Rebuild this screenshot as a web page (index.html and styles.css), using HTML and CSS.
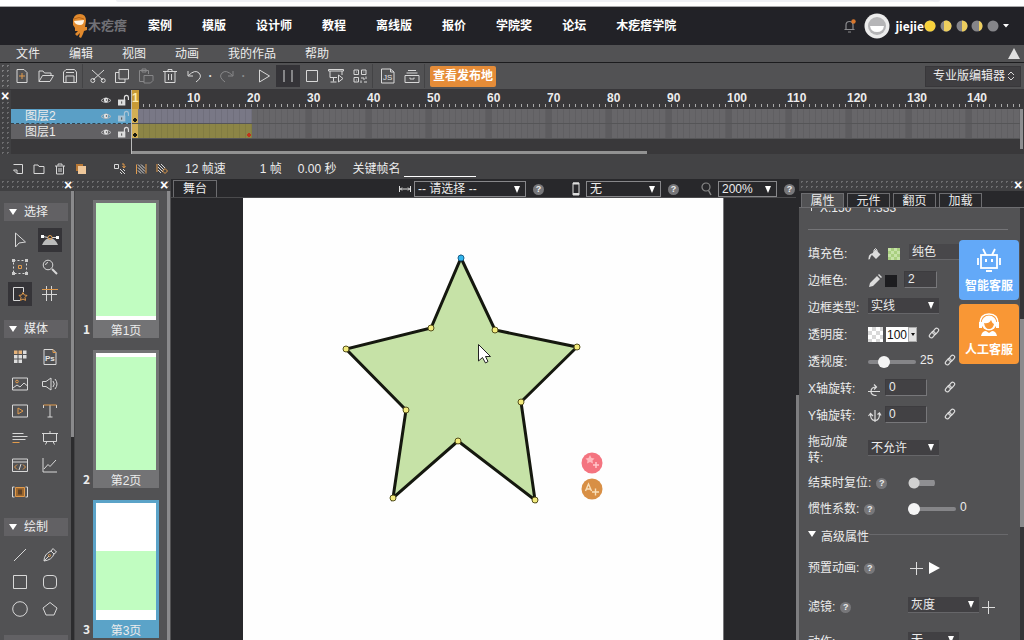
FILE: index.html
```html
<!DOCTYPE html>
<html lang="zh-CN">
<head>
<meta charset="utf-8">
<title>木疙瘩</title>
<link rel="stylesheet" href="styles.css">
</head>
<body>
<svg class="defs" aria-hidden="true">
  <symbol id="eye" viewBox="0 0 12 10"><path d="M1 5.500Q6 .5 11 5.500Q6 9.500 1 5.500Z" fill="none" stroke="#b4b4b6"/><circle cx="6" cy="5" r="2.200" fill="#e4e4e4"/><circle cx="6.500" cy="5" r=".8" fill="#444"/></symbol>
  <symbol id="lock" viewBox="0 0 12 12"><path d="M0 5.500h8V12H0z" fill="currentColor"/><path d="M7 6V3.500a2.200 2.500 0 0 1 4.400 0V6" fill="none" stroke="currentColor" stroke-width="1.300"/><path d="M4 7.500v2.500" stroke="#444"/></symbol>
  <symbol id="link" viewBox="0 0 14 14"><g fill="none" stroke="#dcdcdc" stroke-width="1.400"><rect x="5" y="2.700" width="8" height="4.600" rx="2.300" transform="rotate(-50 9 5)"/><rect x="1" y="6.700" width="8" height="4.600" rx="2.300" transform="rotate(-50 5 9)"/></g></symbol>
</svg>

<div class="browser-edge"><span></span></div>

<header class="site">
  <div class="logo">
    <svg width="16" height="26" viewBox="0 0 16 26"><path d="M1 9Q1 1 8 1Q14 1 14 8L13 14L15 14V17L12 18L11 21L9 25L7 24L8 20L5 23L3 21L6 18L3 18L3 15L1 12Z" fill="#e28a2d"/><path d="M2 8L12 7Q12 12 8 12Q3 12 2 8Z" fill="#fff3e2"/><path d="M2 6Q7 3 12 6" stroke="#b76518" fill="none"/></svg>
    <span>木疙瘩</span>
  </div>
  <nav class="site-nav"><a href="#">案例</a><a href="#">模版</a><a href="#">设计师</a><a href="#">教程</a><a href="#">离线版</a><a href="#">报价</a><a href="#">学院奖</a><a href="#">论坛</a><a href="#">木疙瘩学院</a></nav>
  <div class="account">
    <svg width="12" height="14" viewBox="0 0 12 14"><path d="M2 10V6Q2 2.500 5.500 2.500T9 6v4M.5 10.500h10M4 13h3" fill="none" stroke="#8b8b8e" stroke-width="1.200"/><circle cx="9.500" cy="2.500" r="2.200" fill="#d9772c"/></svg>
    <svg class="avatar" width="26" height="26" viewBox="0 0 26 26"><circle cx="13" cy="13" r="12.500" fill="#ececec"/><circle cx="13" cy="13" r="9" fill="#b5b5b7"/><path d="M6 13h14Q19 19 13 19T6 13Z" fill="#fff"/></svg>
    <strong>jiejie</strong>
    <svg width="76" height="12" viewBox="0 0 76 12"><g fill="#858589"><circle cx="6" cy="6" r="5.500"/><circle cx="22" cy="6" r="5.500"/><circle cx="38" cy="6" r="5.500"/><circle cx="53" cy="6" r="5.500"/><circle cx="69" cy="6" r="5.500"/></g><circle cx="6" cy="6" r="5.500" fill="#f8d23c"/><g fill="#edce5e"><path d="M20 .9a5.500 5.500 0 1 1 0 10.200ZM38 .5a5.500 5.500 0 0 1 0 11ZM55 .9a5.500 5.500 0 0 1 0 10.200Z"/></g></svg>
    <svg width="6" height="4" viewBox="0 0 6 4"><path d="M0 0h6L3 3.500Z" fill="#fff"/></svg>
  </div>
</header>

<nav class="menubar"><a href="#">文件</a><a href="#">编辑</a><a href="#">视图</a><a href="#">动画</a><a href="#">我的作品</a><a href="#">帮助</a>
  <svg width="12" height="12" viewBox="0 0 12 12"><path d="M6 0L12 11H0Z" fill="#e0e0e0"/></svg></nav>

<div class="toolbar">
  <span class="grip"></span>
  <button aria-label="新建"><svg viewBox="0 0 16 16"><path d="M3 1.500h7l3 3v10H3z"/><path class="o" d="M8 5v6M5 8h6"/></svg></button>
  <button aria-label="打开"><svg viewBox="0 0 16 16"><path d="M1 13.500V3h4l1.500 2H13v2.500M1 13.500L4.500 7.500H15.500L12 13.500Z"/></svg></button>
  <button aria-label="保存"><svg viewBox="0 0 16 16"><path d="M1.500 4L4 1.500h8.500L14.500 4v10.500h-13zM4 14V8h8v6M4 4.500h8"/></svg></button>
  <i class="sep"></i>
  <button aria-label="剪切"><svg viewBox="0 0 16 16"><path d="M2 2L13 12M14 2L3 12"/><circle cx="2.800" cy="12.500" r="2"/><circle cx="13.200" cy="12.500" r="2"/></svg></button>
  <button aria-label="复制"><svg viewBox="0 0 16 16"><path d="M5 1.500h9.500V11H5zM5 4.500H1.500v10H11V11"/></svg></button>
  <button aria-label="粘贴" class="dim"><svg viewBox="0 0 16 16"><path d="M6 13.500H1.500v-11h9V6M4 1h4v3H4zM6 7.500h9v5l-2.500 2.500H6z"/></svg></button>
  <button aria-label="删除"><svg viewBox="0 0 16 16"><path d="M1 3.500h14M6 3V1.500h4V3M3 3.500V14.500h10V3.500M6.500 6v6M9.500 6v6"/></svg></button>
  <button aria-label="撤销"><svg viewBox="0 0 16 16"><path d="M2 3v5h5M2.500 7.500Q9 1 13 5T10 14"/></svg></button>
  <i class="dot">·</i>
  <button aria-label="重做" class="dim"><svg viewBox="0 0 16 16"><path d="M14 3v5H9M13.500 7.500Q7 1 3 5T6 14"/></svg></button>
  <i class="dot dim">·</i>
  <button aria-label="播放" class="play"><svg viewBox="0 0 16 16"><path d="M3.500 2L13.500 8L3.500 14Z"/></svg></button>
  <button aria-label="暂停" class="on"><svg viewBox="0 0 16 16"><path d="M4 2v12M12 2v12"/></svg></button>
  <button aria-label="停止"><svg viewBox="0 0 16 16"><path d="M2.500 2.500h11v11h-11z"/></svg></button>
  <button aria-label="预览"><svg viewBox="0 0 16 16"><path d="M.5 1.500h15v1.500H.5zM2 3v6.500h7M14 3v4M5.500 9.500v4M2.500 14h6M10.500 7v7l4.500-3.500Z"/></svg></button>
  <button aria-label="二维码"><svg viewBox="0 0 16 16"><path d="M2 2h4.500v4.500H2zM9.500 2H14v4.500H9.500zM2 9.500h4.500V14H2zM9 10h3v2M14 8.500V11M9 12.500V15M12 14h3M4 4h.8M11.500 4h.8M4 12h.8"/></svg></button>
  <i class="sep"></i>
  <button aria-label="脚本"><svg viewBox="0 0 16 16"><path d="M1.500 1h9l3.500 3v11H1.500zM10.500 1v3H14"/><text x="3" y="12">JS</text></svg></button>
  <button aria-label="素材库"><svg viewBox="0 0 16 16"><path d="M1 7.500h14v7H1zM2.500 5h11M4 2.500h8M6 9.500v1.500h4V9.500"/></svg></button>
  <i class="sep"></i>
  <button class="publish">查看发布地</button>
  <button class="editor">专业版编辑器<svg viewBox="0 0 8 12"><path d="M1 5L4 2L7 5M1 7L4 10L7 7"/></svg></button>
</div>

<section class="timeline">
  <div class="strip"><button class="close" aria-label="关闭">×</button></div>
  <div class="layers">
    <div class="layer head"><span></span><svg class="eye"><use href="#eye"/></svg><svg class="lock"><use href="#lock"/></svg></div>
    <div class="layer selected"><span>图层2</span><svg class="eye"><use href="#eye"/></svg><svg class="lock"><use href="#lock"/></svg></div>
    <div class="layer"><span>图层1</span><svg class="eye"><use href="#eye"/></svg><svg class="lock"><use href="#lock"/></svg></div>
  </div>
  <div class="frames">
    <div class="ruler"><b class="now">1</b><b>10</b><b>20</b><b>30</b><b>40</b><b>50</b><b>60</b><b>70</b><b>80</b><b>90</b><b>100</b><b>110</b><b>120</b><b>130</b><b>140</b></div>
    <div class="track"><span class="key"></span><span class="span violet"></span></div>
    <div class="track"><span class="key"></span><span class="span olive"></span></div>
    <div class="scroll-x"><span></span></div>
  </div>
  <div class="frame-scroll"></div>
</section>

<div class="status">
  <div class="layer-tools">
    <button aria-label="新建图层"><svg viewBox="0 0 12 12"><path d="M1.500 1.500h9v9H5L1.500 7H5v3.500"/></svg></button>
    <button aria-label="新建文件夹"><svg viewBox="0 0 12 12"><path d="M1 2h4l1 1.500h5v7H1z"/></svg></button>
    <button aria-label="删除图层"><svg viewBox="0 0 12 12"><path d="M1 3h10M4 2.500V1h4v1.500M2.500 3v8h7V3M5 5v4M7 5v4"/></svg></button>
    <button aria-label="遮罩"><svg viewBox="0 0 12 12"><path d="M1 1h7v7H1z" fill="#b87835" stroke="none"/><path d="M3 3h8v8H3z" fill="#eec79a" stroke="none"/></svg></button>
  </div>
  <div class="layer-tools frame-tools">
    <button aria-label="洋葱皮"><svg viewBox="0 0 12 12"><path d="M.5 1.500h4v4h-4z"/><path d="M6 6l5 5M6 9l2 2M9 6l2 2"/><path class="o" d="M8 1h2v3M8.500 3L10 5l1.500-2"/></svg></button>
    <button aria-label="多帧编辑"><svg viewBox="0 0 12 12"><path d="M3 1.500l7 7M3 4.500l6 6M6 1.500l4 4M3 7.500l3 3"/><path class="o" d="M1.500 11V1.500M11 1v9.500"/></svg></button>
    <button aria-label="帧范围"><svg viewBox="0 0 12 12"><path d="M2 1l6 6M2 4l5 5M5 1l4 4M2 7l3 3"/><path class="o" d="M1 1v8M9 5.500l2.500 2.500L9 10.500L6.500 8Z"/></svg></button>
  </div>
  <span class="fps">12 帧速</span><span class="num">1 帧</span><span class="sec">0.00 秒</span>
  <label for="frame-name">关键帧名</label><input id="frame-name" type="text">
</div>

<main class="workspace">
  <aside class="tools">
    <div class="grip-bar"><button class="close" aria-label="关闭">×</button></div>
    <div class="tools-body">
      <h2>选择</h2>
      <div class="tool-grid">
        <button aria-label="选择"><svg viewBox="0 0 16 16"><path d="M3.500 1v14L7 11L13.500 10Z"/></svg></button>
        <button aria-label="节点" class="on"><svg viewBox="0 0 16 16"><path d="M0 13Q3 6 8 6T16 13Z" fill="#bbb" stroke="none"/><path d="M1 4.500L6 5.500M15 5.500H10"/><path d="M-1 3h3v3h-3zM14 4h3v3h-3z" fill="#fff" stroke="none"/><circle class="o" cx="8" cy="5.500" r="2"/></svg></button>
        <button aria-label="变形"><svg viewBox="0 0 16 16"><path d="M1.500 1.500h13v13h-13z" stroke-dasharray="2 2"/><path d="M0 0h3v3H0zM13 0h3v3h-3zM0 13h3v3H0zM13 13h3v3h-3z" fill="#ccc" stroke="none"/><path class="o" d="M6.500 6.500h3v3h-3z"/></svg></button>
        <button aria-label="缩放"><svg viewBox="0 0 16 16"><circle cx="6" cy="6" r="4.800"/><path d="M3.500 6Q4 3.500 6 3.500"/><path d="M10 10L15 15" stroke-width="2"/></svg></button>
        <button aria-label="收藏" class="on"><svg viewBox="0 0 16 16"><path d="M8 14.500H1.500v-13h10V6"/><path class="o" d="M11 6.500l1.300 2.500 2.700.4-2 2 .5 3-2.500-1.400L8.500 14.400l.5-3-2-2 2.700-.4Z"/></svg></button>
        <button aria-label="参考线"><svg viewBox="0 0 16 16"><path d="M4.500 0v15M9.500 0v15M0 8.500h15"/><path class="o" d="M0 3.500h16"/></svg></button>
      </div>
      <h2>媒体</h2>
      <div class="tool-grid">
        <button aria-label="素材"><svg viewBox="0 0 16 16"><g stroke="none" fill="#ddd"><path d="M2 6h3.500v3.500H2zM6.500 6H10v3.500H6.500zM11 6h3.500v3.500H11zM2 10.500h3.500V14H2zM6.500 10.500H10V14H6.500zM11 1.500h3.500V5H11z"/><path d="M2 1.500h3.500V5H2zM6.500 1.500H10V5H6.500z" fill="#e5b27a"/></g></svg></button>
        <button aria-label="PS 导入"><svg viewBox="0 0 16 16"><path d="M2 .5h9l3 3v12H2z"/><path class="o" d="M11 .5v3h3"/><text class="ps" x="3" y="11.500">Ps</text></svg></button>
        <button aria-label="图片"><svg viewBox="0 0 16 16"><path d="M.5 2h15v12H.5zM1 12l4-3 3 2 4-4 3.500 3"/><circle class="o" cx="5" cy="5.500" r="1.300"/></svg></button>
        <button aria-label="声音"><svg viewBox="0 0 16 16"><path d="M.5 5.500H4L9 2v12L4 10.500H.5zM11 5q2.500 3 0 6M13 3q4 5 0 10"/></svg></button>
        <button aria-label="视频"><svg viewBox="0 0 16 16"><path d="M.5 2h15v12H.5z"/><path class="o" d="M6 5l5 3-5 3Z"/></svg></button>
        <button aria-label="文字"><svg viewBox="0 0 16 16"><path d="M8 2v12M5.500 14h5M1.500 2v3M14.500 2v3"/><path class="o" d="M1.500 2h13"/></svg></button>
        <button aria-label="段落"><svg viewBox="0 0 16 16"><path d="M.5 3.500h11M.5 6.500h15M.5 9.500h13"/><path class="o" d="M.5 12.500h7"/></svg></button>
        <button aria-label="幻灯片"><svg viewBox="0 0 16 16"><path d="M0 3.500h16M1.500 3.500v8h13v-8M8 1v2.500M5 11.500L3.500 14.500M11 11.500l1.500 3"/></svg></button>
        <button aria-label="网页"><svg viewBox="0 0 16 16"><path d="M.5 2h15v12.500H.5zM.5 5h15M9 7l-2 6"/><path class="o" d="M5 7.500L2.500 10L5 12.500M11 7.500l2.500 2.500L11 12.500"/></svg></button>
        <button aria-label="图表"><svg viewBox="0 0 16 16"><path d="M1 1v14h14M2 12L6 7.500l2 2L14 3"/></svg></button>
        <button aria-label="幕布"><svg viewBox="0 0 16 16"><path d="M3 3.500h10v9H3z" fill="#9c672e" stroke="none"/><path d="M6 5.500h4v5H6z" fill="#5d4229" stroke="none"/><path class="o" d="M3.500 3.500h9v9h-9z"/><path d="M2.500 3H.5v10h2M13.500 3h2v10h-2"/></svg></button>
      </div>
      <h2>绘制</h2>
      <div class="tool-grid">
        <button aria-label="直线"><svg viewBox="0 0 16 16"><path d="M2 14L14 2"/></svg></button>
        <button aria-label="钢笔"><svg viewBox="0 0 16 16"><path d="M2 14Q2 7 9 4l3 3Q10 13 2 14ZM9 4l2-2.500L14.500 5L12 7M2 14L7 9"/><circle class="o" cx="7.500" cy="8.500" r="1"/></svg></button>
        <button aria-label="矩形"><svg viewBox="0 0 16 16"><path d="M1.500 1.500h13v13h-13z"/></svg></button>
        <button aria-label="圆角矩形"><svg viewBox="0 0 16 16"><rect x="1.500" y="1.500" width="13" height="13" rx="3.500"/></svg></button>
        <button aria-label="圆形"><svg viewBox="0 0 16 16"><circle cx="8" cy="8" r="7.300"/></svg></button>
        <button aria-label="多边形"><svg viewBox="0 0 16 16"><path d="M8 1.500L15 7L12 14H4L1 7Z"/></svg></button>
      </div>
      <div class="next-group"></div>
    </div>
  </aside>

  <aside class="pages">
    <div class="grip-bar"><button class="close" aria-label="关闭">×</button></div>
    <ol class="page-list">
      <li><span class="no">1</span><figure><div class="thumb one"></div><figcaption>第1页</figcaption></figure></li>
      <li><span class="no">2</span><figure><div class="thumb two"></div><figcaption>第2页</figcaption></figure></li>
      <li class="current"><span class="no">3</span><figure><div class="thumb three"></div><figcaption>第3页</figcaption></figure></li>
    </ol>
  </aside>

  <section class="stage">
    <div class="stage-bar">
      <button class="stage-tab">舞台</button>
      <div class="stage-opt"><svg width="12" height="8" viewBox="0 0 12 8"><path d="M.5 1v6M11.500 1v6M1 4h10M3 2.500L1.500 4L3 5.500M9 2.500L10.500 4L9 5.500" fill="none" stroke="#ddd"/></svg>
        <select class="w-size" aria-label="尺寸"><option>-- 请选择 --</option></select><span class="help">?</span></div>
      <div class="stage-opt phone"><svg width="8" height="14" viewBox="0 0 8 14"><path d="M1 1h6v12H1z" fill="none" stroke="#ddd"/><path d="M1 1.500h6M1 12h6" stroke="#ddd" stroke-width="2"/></svg>
        <select class="w-device" aria-label="设备"><option>无</option></select><span class="help">?</span></div>
      <div class="stage-opt zoom"><svg width="12" height="14" viewBox="0 0 12 14"><circle cx="6" cy="5" r="4" fill="none" stroke="#888" stroke-width="1.200"/><path d="M8.500 8.500L11 13" stroke="#888" stroke-width="1.500"/></svg>
        <select class="w-zoom" aria-label="缩放"><option>200%</option></select><span class="help">?</span></div>
    </div>
    <div class="stage-body">
      <svg class="canvas" width="480" height="442" viewBox="243 198 480 442">
        <path d="M461 258L495 330L577 347L521 402L535 500L458 441L393 498L406 410L346 349L431 328Z" fill="#c6e2a7" stroke="#15180f" stroke-width="3"/>
        <g fill="#f3eb7c" stroke="#55501c"><circle cx="461" cy="258" r="3" fill="#32b6ee" stroke="#17618c"/><circle cx="495" cy="330" r="3"/><circle cx="577" cy="347" r="3"/><circle cx="521" cy="402" r="3"/><circle cx="535" cy="500" r="3"/><circle cx="458" cy="441" r="3"/><circle cx="393" cy="498" r="3"/><circle cx="406" cy="410" r="3"/><circle cx="346" cy="349" r="3"/><circle cx="431" cy="328" r="3"/></g>
        <path d="M478.500 344.500V361L482.500 357.500L485.500 363L488 361.500L485.500 356.500H490.500Z" fill="#fff" stroke="#222"/>
        <circle cx="592" cy="463" r="10.500" fill="#f47480"/><path d="M590 455l1.500 3 3 .4-2 2 .5 3-3-1.400-3 1.400.5-3-2-2 3-.4Z" fill="#ffb9bd"/><path d="M593 465h6M596 462v6" stroke="#ffc8cb" stroke-width="1.500"/>
        <circle cx="592" cy="489" r="10.500" fill="#d88f45"/><path d="M585.500 491l3-7 3 7M586.500 489h4M592 492h7M595.500 488.500v7" fill="none" stroke="#f9dfb9" stroke-width="1.400"/>
      </svg>
    </div>
  </section>

  <aside class="props">
    <div class="grip-bar"><button class="close" aria-label="关闭">×</button></div>
    <div class="tabs"><button class="active">属性</button><button>元件</button><button>翻页</button><button>加载</button></div>
    <form class="props-body">
      <p class="coords"><span>X:150</span><span>Y:333</span></p>
      <hr>
      <div class="row"><label for="fill">填充色:</label><svg width="14" height="14" viewBox="0 0 14 14"><path d="M7.500 2.500l5 5-4.500 4.500L3.500 7.500Z" fill="#ddd"/><path d="M6 6V3q1.500-3 3 0v4" fill="none" stroke="#ddd"/><path d="M5 6Q0 7 .5 12.500Q2 13 2.500 10Z" fill="#ddd"/></svg><button type="button" class="swatch green" aria-label="填充颜色"></button><select id="fill" class="plain"><option>纯色</option></select></div>
      <div class="row"><label for="border">边框色:</label><svg width="14" height="14" viewBox="0 0 14 14"><path d="M1 13l1-4 7-7 3 3-7 7ZM10 1l1-1 3 3-1 1Z" fill="#ddd"/></svg><button type="button" class="swatch black" aria-label="边框颜色"></button><input id="border" type="text" class="w-border" value="2"></div>
      <div class="row"><label for="btype">边框类型:</label><select id="btype" class="w-type"><option>实线</option></select></div>
      <div class="row"><label for="alpha">透明度:</label><i class="checker"></i><div class="combo"><input id="alpha" type="text" value="100"><button type="button" aria-label="展开"></button></div><svg class="chain near"><use href="#link"/></svg></div>
      <div class="row"><label for="persp">透视度:</label><input id="persp" type="range" min="0" max="100" value="27"><span class="val">25</span><svg class="chain"><use href="#link"/></svg></div>
      <div class="row"><label for="rx">X轴旋转:</label><svg width="14" height="14" viewBox="0 0 14 14"><path d="M0 9.500h12M8.500 5Q3 5 3 9.500Q3 13.500 8.500 13.500M6 2.500L8.500 5L6 7.500" fill="none" stroke="#ddd" stroke-width="1.200"/></svg><input id="rx" type="text" class="w-rot" value="0"><svg class="chain"><use href="#link"/></svg></div>
      <div class="row"><label for="ry">Y轴旋转:</label><svg width="14" height="14" viewBox="0 0 14 14"><path d="M7 1v12M2.500 5Q2.500 11.500 7 11.500T11.500 5M.5 7l2-2.500L5 7M9.500 5.500l2-1.500 1.500 2.500" fill="none" stroke="#ddd" stroke-width="1.200"/></svg><input id="ry" type="text" class="w-rot" value="0"><svg class="chain"><use href="#link"/></svg></div>
      <div class="row tall"><label for="drag">拖动/旋转:</label><select id="drag" class="w-type"><option>不允许</option></select></div>
      <div class="row short"><label for="reset" class="wide">结束时复位:<span class="help">?</span></label><input id="reset" type="checkbox"></div>
      <div class="row short"><label for="inertia" class="wide">惯性系数:<span class="help">?</span></label><input id="inertia" type="range" min="0" max="100" value="0"><span class="val">0</span></div>
      <fieldset>
        <legend>高级属性</legend>
        <div class="row mid"><span class="wide">预置动画:<span class="help">?</span></span><button type="button" class="plus" aria-label="添加动画"></button><button type="button" class="go" aria-label="播放动画"></button></div>
        <div class="row high"><label for="filter" class="wide">滤镜:<span class="help">?</span></label><select id="filter" class="w-type"><option>灰度</option></select><button type="button" class="plus after" aria-label="添加滤镜"></button></div>
        <div class="row low"><label for="act" class="wide">动作:</label><select id="act" class="w-act"><option>无</option></select></div>
      </fieldset>
    </form>
    <div class="service">
      <button class="bot"><svg width="26" height="26" viewBox="0 0 26 26"><g fill="none" stroke="#fff" stroke-width="1.800"><rect x="5" y="8" width="16" height="13"/><path d="M10 8L7 2M16 8l3-6M2 11v7M24 11v7M10 24h6"/><path d="M10 12v3M16 12v3" stroke-width="2"/></g></svg>智能客服</button>
      <button class="human"><svg width="26" height="26" viewBox="0 0 26 26"><path d="M4 13Q4 3 13 3T22 13" fill="none" stroke="#fff" stroke-width="1.500"/><circle cx="13" cy="12" r="7.500" fill="#fff"/><path d="M8 12q5 1 7-3q1 3 3 4q-1 5-5 5t-5-6Z" fill="#f99735"/><path d="M3 11h3v6H3zM20 11h3v6h-3zM5 25q1-5 5-5l3 2 3-2q4 0 5 5Z" fill="#fff"/></svg>人工客服</button>
    </div>
  </aside>
</main>
</body>
</html>
```

FILE: styles.css
```css
* { box-sizing: border-box; }
html, body { height: 100%; margin: 0; }
body {
  display: flex; flex-direction: column; overflow: hidden;
  background: #525254; color: #ececec;
  font: 12px/16px "Liberation Sans", "Noto Sans CJK SC", sans-serif;
}
a { color: inherit; text-decoration: none; }
button, input, select { font: inherit; color: inherit; margin: 0; padding: 0; border: 0; border-radius: 0; background: none; }
svg { flex: none; display: block; }
.defs { display: none; }
p, h2, ol, figure, fieldset { margin: 0; padding: 0; border: 0; min-width: 0; }

.browser-edge { flex: none; height: 7px; background: #fff; border-bottom: 1px solid #a9a9ab; }
.browser-edge span { display: block; height: 2px; margin: 0 84px 0 116px; background: #f0f1f5; border-radius: 0 0 8px 8px; }

/* site header */
.site { flex: none; display: flex; align-items: center; height: 38px; padding: 0 15px 0 72px; background: #222227; }
.logo { display: flex; align-items: center; color: #717176; font-size: 13px; font-weight: bold; }
.site-nav { display: flex; gap: 30px; margin-left: 21px; color: #fff; font-weight: bold; }
.account { display: flex; align-items: center; margin-left: auto; color: #fff; }
.avatar { margin: 0 5px 0 8px; }
.account strong { font-family: "Noto Sans CJK SC", sans-serif; }
.account svg:last-child { margin-left: 3px; }

.menubar { flex: none; display: flex; align-items: center; height: 18px; padding: 0 4px 0 16px; gap: 29px; border-bottom: 1px solid #1c1c1e; }
.menubar svg { margin-left: auto; }

/* toolbar */
.toolbar { flex: none; display: flex; align-items: center; height: 27px; padding-right: 3px; border-bottom: 1px solid #38373a; }
.grip { width: 10px; align-self: stretch; background: radial-gradient(#7c7c7e 1px, transparent 1px) 0 0 / 5px 5px #48484a; }
.toolbar button { flex: none; display: flex; align-items: center; justify-content: center; width: 24px; height: 22px; }
.toolbar svg, .tool-grid svg, .layer-tools svg { width: 16px; height: 16px; fill: none; stroke: #d8d8d8; overflow: visible; }
.toolbar svg text { fill: #e4e4e4; stroke: none; font: 8px "Liberation Sans", sans-serif; }
.tool-grid svg .ps { fill: #e4e4e4; stroke: none; font: bold 8px "Liberation Sans", sans-serif; }
svg .o { stroke: #e09a4c; }
.toolbar .dim { opacity: .4; }
.toolbar .on, .tool-grid .on { background: #353438; }
.sep { width: 4px; height: 24px; border-left: 1px solid #434345; }
.dot { width: 9px; text-align: center; color: #ddd; font-style: normal; font-weight: bold; }
.toolbar .play { margin-left: 4px; }
.toolbar .publish { width: auto; height: 21px; padding: 0 3px; margin-left: 2px; border-radius: 2px; background: #e58c38; color: #fff; font-weight: bold; }
.toolbar .editor { width: auto; height: 21px; padding: 0 5px 0 7px; margin-left: auto; gap: 2px; background: #3f3e41; border: 1px solid #38373a; }
.toolbar .editor svg { width: 8px; height: 12px; }

/* timeline */
.timeline { flex: none; display: flex; height: 64px; background: #39383a; }
.strip { width: 11px; flex: none; background: radial-gradient(#6c6c6e 1px, transparent 1px) 0 0 / 5px 5px #404042; }
.close { display: block; width: 10px; height: 12px; font: bold 14px/12px "Liberation Sans", sans-serif; color: #fff; }
.layers { width: 120px; flex: none; }
.layer { display: flex; align-items: center; height: 15px; padding: 0 2px 0 14px; background: #626164; }
.layer.head { height: 19px; background: none; }
.layer.selected { background: #5a9fc6; border-bottom: 1px dashed #33424c; }
.layer span { flex: 1; }
.eye { width: 12px; height: 10px; margin-right: 6px; }
.lock { width: 11px; height: 12px; color: #ddd; }
.selected .lock { color: #a9c3d4; }
.frames { flex: 1; min-width: 0; overflow: hidden; border-left: 1px solid #bbb; }
.ruler { display: flex; height: 19px; background: repeating-linear-gradient(90deg, transparent 0 5px, #a9a9a9 5px 6px) 0 14px / 100% 3px no-repeat; }
.ruler b { flex: none; width: 60px; }
.ruler .now { width: 7px; margin-right: 48px; background: #c79a36; color: #fbe9a8; }
.track { display: flex; height: 15px; border-bottom: 1px solid #555557;
  background: repeating-linear-gradient(90deg, transparent 0 54px, #5d5c5f 54px 60px), repeating-linear-gradient(90deg, #676669 0 5px, #605f62 5px 6px); }
.key { width: 6px; background: radial-gradient(circle at 3px 11px, #1b1b10 2px, transparent 2px) #d3b055; }
.span { width: 114px; }
.violet { background: repeating-linear-gradient(90deg, #797886 0 5px, #706f7c 5px 6px); }
.olive { background: radial-gradient(circle at 111px 11px, #c0351c 2px, transparent 2px), repeating-linear-gradient(90deg, #8c8546 0 5px, #827c42 5px 6px); }
.scroll-x { height: 15px; padding-top: 12px; }
.scroll-x span { display: block; width: 58%; height: 3px; background: #929292; }
.frame-scroll { flex: none; width: 3px; margin: 19px 1px 5px 0; background: #8e8e90; }

.status { flex: none; display: flex; align-items: center; height: 25px; padding: 4px 12px 0; background: #434345; }
.layer-tools { display: flex; gap: 9px; margin-right: 27px; }
.layer-tools.frame-tools { margin-right: 17px; }
.layer-tools button { width: 12px; }
.layer-tools svg { width: 12px; height: 12px; }
.fps { margin-right: 34px; }
.num, .sec { margin-right: 16px; }
.status input { width: 72px; height: 17px; margin-left: 4px; border-bottom: 1px solid #fff; }

/* workspace */
.workspace { flex: 1; min-height: 0; display: flex; background: #28282b; }
.grip-bar { flex: none; display: flex; justify-content: flex-end; height: 12px; padding-right: 1px; background: radial-gradient(#6c6c6e 1px, transparent 1px) 0 0 / 5px 5px #404042; }
.tools { flex: none; width: 74px; display: flex; flex-direction: column; background: #525254; }
.tools-body { flex: 1; overflow: hidden; padding: 12px 3px 0 4px; border-right: 3px solid; border-image: linear-gradient(#8a8a8c 246px, #2c2c2e 246px) 1; border-top: 0; border-bottom: 0; border-left: 0; }
.tools h2 { display: flex; align-items: center; gap: 7px; height: 18px; padding-left: 5px; background: #626164; font-size: 12px; font-weight: normal; }
.tools h2::before { content: ""; border: 4px solid transparent; border-top: 6px solid #fff; border-bottom: 0; }
.tool-grid { display: grid; grid-template-columns: 30px 30px; grid-auto-rows: 27px; padding: 5px 0 13px 1px; }
.tool-grid button { display: grid; place-items: center; width: 24px; height: 24px; place-self: center; }
.next-group { height: 18px; background: #626164; }

.pages { flex: none; width: 97px; display: flex; flex-direction: column; background: #525254; border-left: 1px solid #434345; }
.pages .grip-bar { padding-right: 2px; }
.page-list { flex: 1; overflow: hidden; list-style: none; display: flex; flex-direction: column; gap: 12px; padding: 9px 8px 0 0; margin-right: 1px; border-right: 3px solid #8a8a8c; }
.page-list li { flex: none; display: flex; justify-content: flex-end; align-items: flex-end; gap: 3px; }
.no { font: bold 12px/18px "Noto Sans CJK SC", sans-serif; }
.page-list figure { width: 66px; padding: 3px 3px 0; background: #737375; }
.current figure { background: #5ba3c8; }
.thumb { height: 117px; }
.one { background: linear-gradient(#c1fdc1 113px, #fff 113px); }
.two { background: linear-gradient(#fff 4px, #c1fdc1 4px); }
.three { background: linear-gradient(#fff 48px, #c1fdc1 48px 107px, #fff 107px); }
figcaption { height: 18px; line-height: 23px; text-align: center; }

.stage { flex: 1; min-width: 0; display: flex; flex-direction: column; border-right: 3px solid; border-image: linear-gradient(#28282b 216px, #7e7e80 216px) 1; border-top: 0; border-bottom: 0; border-left: 0; }
.stage-bar { flex: none; display: flex; align-items: flex-end; height: 19px; padding: 0 1px 0 2px; border-bottom: 1px solid #4b4b4d; }
.stage-tab { width: 44px; height: 17px; margin-right: auto; border: 1px solid #6d6d70; border-bottom: 0; }
.stage-opt { display: flex; align-items: center; }
.stage-opt svg { margin-right: 3px; }
.phone { margin-left: 28px; }
.phone svg { margin-right: 6px; }
.zoom { margin-left: 21px; }
.zoom svg { margin-right: 6px; }
select { appearance: none; height: 16px; padding: 0 16px 0 3px; }
.stage-opt select, .w-type, .w-act {
  background: url("data:image/svg+xml,%3Csvg xmlns='http://www.w3.org/2000/svg' width='6' height='7'%3E%3Cpath d='M0 0h6L3 7Z' fill='%23fff'/%3E%3C/svg%3E") right 5px top 4px / 6px 7px no-repeat #28282b;
}
.stage-opt select { border: 1px solid #87878a; line-height: 14px; }
.w-size { width: 112px; }
.w-device { width: 75px; }
.w-zoom { width: 59px; }
.help { flex: none; width: 11px; height: 11px; margin-left: 7px; border-radius: 50%; background: #77777a; font: bold 9px/11px "Liberation Sans", sans-serif; text-align: center; }
.stage-body { flex: 1; min-height: 0; display: flex; justify-content: center; overflow: hidden; padding-right: 2px; }
.canvas { background: #fefefe; box-shadow: 1px 0 #77777a; }

/* properties */
.props { position: relative; flex: none; width: 225px; display: flex; flex-direction: column; background: #525254; }
.tabs { flex: none; display: flex; gap: 3px; height: 17px; padding: 2px 0 0 2px; background: #28282b; border-bottom: 1px solid #6d6d70; }
.tabs button { width: 43px; border: 1px solid #6d6d70; border-bottom: 0; line-height: 14px; }
.tabs .active { background: #525254; }
.props-body { flex: 1; min-height: 0; overflow: hidden; padding: 0 12px 0 9px; border-right: 4px solid; border-image: linear-gradient(#353437 111px, #8a8a8c 111px 319px, #353437 319px) 1; border-top: 0; border-bottom: 0; border-left: 0; }
.coords { display: flex; gap: 14px; height: 22px; margin-top: -8px; padding-left: 3px; }
.coords::before { content: ""; width: 1px; height: 11px; margin-right: -6px; background: #ddd; }
hr { height: 1px; margin: 7px 0 10px; border: 0; background: #747477; }
.row { display: flex; align-items: center; height: 27px; }
.row label { flex: none; width: 60px; white-space: nowrap; }
.row .wide { display: flex; align-items: center; flex: none; width: 100px; }
.wide .help { margin-left: 5px; }
.row.tall { height: 41px; }
.tall label { width: 42px; margin-right: 18px; white-space: normal; }
.row.short { height: 26px; }
.row.mid { height: 32px; }
.row.high { height: 46px; }
.row.low { height: 24px; }
.row > input[type=text] { height: 17px; padding-left: 3px; margin-bottom: 3px; background: #424144; border: 1px solid #3d3c3f; border-right-color: #77777a; border-bottom-color: #77777a; }
.row .w-border { width: 33px; margin-left: 7px; }
.row .w-rot { width: 42px; margin-left: 3px; }
.w-type, .w-act, .plain { margin-bottom: 4px; background-color: #414043; border-bottom: 1px solid #666669; }
.w-type { width: 71px; }
.w-act { width: 51px; }
.plain { width: 60px; margin-left: 9px; background-color: #48474a; }
.swatch { width: 12px; height: 12px; margin-left: 6px; }
.swatch.green { background: repeating-conic-gradient(#a9cf80 0 25%, #c6e2a7 0 50%) 0 0 / 6px 6px; }
.swatch.black { margin-left: 3px; background: #1c1c1f; }
.checker { width: 15px; height: 15px; background: repeating-conic-gradient(#d8d8d8 0 25%, #fff 0 50%) 0 0 / 8px 8px; }
.combo { display: flex; width: 31px; height: 15px; margin-left: 3px; background: #fff; color: #111; }
.combo input { width: 22px; height: 15px; padding-left: 1px; }
.combo button { display: grid; place-items: center; width: 9px; background: #e2e2e2; border: 1px solid #aaa; }
.combo button::before { content: ""; border: 2px solid transparent; border-top: 3px solid #111; border-bottom: 0; }
.chain { width: 12px; height: 12px; margin: 0 52px 4px auto; }
.chain.near { margin-right: 68px; }
.val { margin: 0 0 4px 4px; }
input[type=range] { appearance: none; width: 48px; height: 12px; }
input[type=range]::-webkit-slider-runnable-track { height: 4px; background: #858588; border-radius: 2px; }
input[type=range]::-webkit-slider-thumb { appearance: none; width: 12px; height: 12px; margin-top: -4px; border-radius: 50%; background: #f4f4f4; }
input[type=checkbox] { appearance: none; width: 27px; height: 12px; background: radial-gradient(circle at 6px 6px, #d0d0d0 5px, transparent 6px), linear-gradient(#8f8f92, #8f8f92) 6px 3px / 21px 6px no-repeat; border-radius: 6px; }
legend { display: flex; align-items: center; width: 100%; gap: 5px; height: 30px; padding: 0; }
legend::before { content: ""; border: 4px solid transparent; border-top: 6px solid #fff; border-bottom: 0; margin-bottom: 6px; }
legend::after { content: ""; flex: 1; height: 1px; margin: 0 0 6px -5px; background: #69696c; }
.plus { width: 13px; height: 13px; margin-left: 2px; background: linear-gradient(#ddd, #ddd) 6px 0 / 1px 13px no-repeat, linear-gradient(#ddd, #ddd) 0 6px / 13px 1px no-repeat; }
.plus.after { margin-left: 3px; }
.go { margin-left: 6px; border: 6px solid transparent; border-left: 11px solid #fff; border-right: 0; }

/* floating customer service */
.service { position: absolute; top: 61px; right: 5px; display: grid; gap: 4px; }
.service button { display: flex; flex-direction: column; align-items: center; justify-content: center; gap: 5px; width: 60px; height: 60px; border-radius: 4px; color: #fff; font-weight: bold; }
.bot { background: #63a9f8; }
.human { background: #f99735; }
```
